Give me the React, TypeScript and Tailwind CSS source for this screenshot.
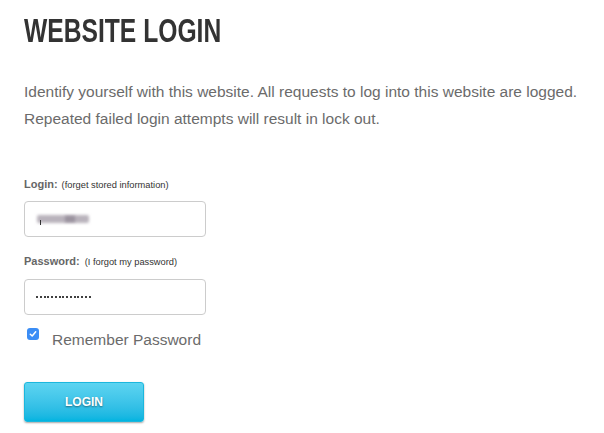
import React from "react";

export default function App() {
  const dots = Array.from({ length: 15 });
  return (
    <div className="w-[604px] h-[433px] bg-white pl-[24px] pt-[10px] text-[#666]" style={{ fontFamily: '"Liberation Sans", Arial, sans-serif' }}>
      <h1 className="text-[34px] leading-[40px] font-bold text-[#333] origin-left scale-x-[0.725] whitespace-nowrap">
        WEBSITE LOGIN
      </h1>
      <p className="mt-[28px] text-[15.5px] leading-[27px] text-[#6b6b6b]">
        Identify yourself with this website. All requests to log into this website are logged.
        <br />
        Repeated failed login attempts will result in lock out.
      </p>
      <div className="mt-[44px] flex items-baseline gap-[4px]">
        <span className="text-[11px] font-bold text-[#666]">Login:</span>
        <span className="text-[9.3px] text-[#333]">(forget stored information)</span>
      </div>
      <div className="mt-[8px] w-[182px] h-[36px] rounded-[4px] border border-[#ccc] flex items-center pl-[12px]">
        <div className="relative w-[52px] h-[8px]">
          <div className="absolute inset-0 rounded-[2px] bg-[#b9b3bc] blur-[1.5px]" />
          <div className="absolute left-[28px] top-[1px] w-[10px] h-[6px] bg-[#9a929e] blur-[1.5px]" />
          <div className="absolute left-[3px] top-[5px] w-[1px] h-[5px] bg-[#333]" />
        </div>
      </div>
      <div className="mt-[16px] flex items-baseline gap-[5px]">
        <span className="text-[11px] font-bold text-[#666]">Password:</span>
        <span className="text-[9.3px] text-[#333]">(I forgot my password)</span>
      </div>
      <div className="mt-[9px] w-[182px] h-[36px] rounded-[4px] border border-[#ccc] flex items-center pl-[11px]">
        <div className="flex gap-[1.75px]">
          {dots.map((_, i) => (
            <div key={i} className="w-[2px] h-[2px] rounded-full bg-black" />
          ))}
        </div>
      </div>
      <div className="mt-[12px] flex items-start">
        <div className="ml-[3px] mt-[1px] w-[12px] h-[12px] rounded-[3px] bg-[#3b8df5] flex items-center justify-center">
          <svg width="8" height="8" viewBox="0 0 8 8">
            <path d="M1.3 4.2 L3.2 6 L6.7 1.8" stroke="white" strokeWidth="1.5" fill="none" strokeLinecap="round" strokeLinejoin="round" />
          </svg>
        </div>
        <span className="ml-[13px] mt-[3px] text-[15.5px] leading-[20px] text-[#6b6b6b]">Remember Password</span>
      </div>
      <button
        className="mt-[32px] w-[120px] h-[40px] rounded-[3px] border border-[#1bb7dd] bg-gradient-to-b from-[#5cd4f1] to-[#00b4e0] shadow-[0_1px_2px_rgba(0,0,0,0.35)] text-white text-[12px] font-bold"
        style={{ textShadow: "0 1px 2px rgba(0,0,0,0.45)" }}
      >
        LOGIN
      </button>
    </div>
  );
}
